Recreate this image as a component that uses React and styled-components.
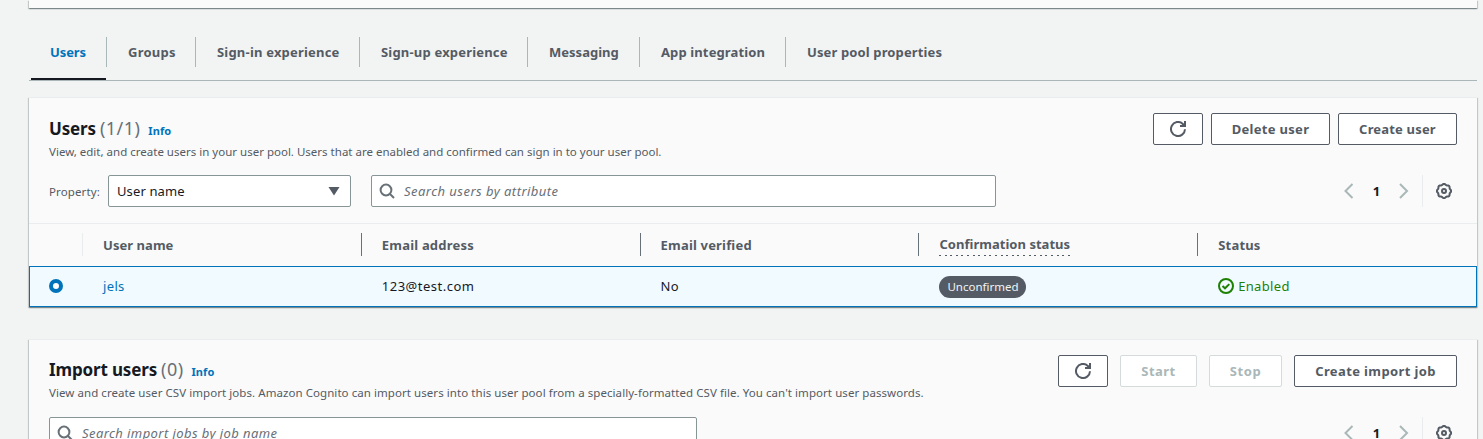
import React from 'react';
import styled, { createGlobalStyle, css } from 'styled-components';

const GlobalStyle = createGlobalStyle`
  *, *::before, *::after { box-sizing: border-box; }
  html, body { margin: 0; background: #f2f3f3; }
  body {
    height: 439px;
    overflow: hidden;
    font-family: "Noto Sans", "Open Sans", sans-serif;
    font-size: 13px;
    line-height: 20px;
    color: #16191f;
  }
`;

const Page = styled.main`
  width: 1483px;
  height: 439px;
  padding: 0 6px 0 29px;
  overflow: hidden;
`;

const Label = styled.span`
  white-space: nowrap;
  letter-spacing: ${(p) => p.$track || 0}px;
`;

const Panel = styled.section`
  background: #fafafa;
  border-top: 1px solid #eaeded;
  box-shadow:
    0 1px 1px 0 rgba(0, 28, 36, 0.3),
    1px 1px 1px 0 rgba(0, 28, 36, 0.15),
    -1px 1px 1px 0 rgba(0, 28, 36, 0.15);
`;

const PreviousPanel = styled(Panel)`
  height: 8px;
  border-top: 0;
`;

const TabList = styled.nav`
  display: flex;
  height: 57px;
  margin-top: 16px;
  padding-left: 2px;
  border-bottom: 1px solid #aab7b8;
`;

const Tab = styled.a`
  display: flex;
  align-items: flex-start;
  height: 56px;
  width: ${(p) => p.$width}px;
  padding-top: 13px;
  border-bottom: 2px solid ${(p) => (p.$active ? '#16191f' : 'transparent')};
  color: ${(p) => (p.$active ? '#0073bb' : '#545b64')};
  font-size: 13px;
  font-weight: 700;
`;

const TabText = styled.span`
  flex: 1;
  height: 30px;
  padding-left: ${(p) => (p.$active ? 19 : 21)}px;
  line-height: 30px;
`;

const TabDivider = styled.span`
  width: 1px;
  height: 30px;
  margin-top: 13px;
  background: #aab7b8;
`;

const UsersPanel = styled(Panel)`
  height: 210px;
  margin-top: 16px;
`;

const ImportPanel = styled(Panel)`
  height: 160px;
  margin-top: 32px;
`;

const PanelHeader = styled.header`
  display: flex;
  justify-content: space-between;
  height: 77px;
  padding: 15px 20px 0;
`;

const Heading = styled.div`
  padding-top: ${(p) => p.$top}px;
`;

const TitleLine = styled.div`
  display: flex;
  align-items: baseline;
  height: 24px;
  line-height: 24px;
`;

const Title = styled.h2`
  margin: 0;
  font-size: 17px;
  font-weight: 700;
  letter-spacing: -0.15px;
`;

const Count = styled.span`
  margin-left: 4px;
  color: #687078;
  font-size: 18px;
  letter-spacing: 0.45px;
`;

const InfoLink = styled.a`
  margin-left: 8px;
  color: #0073bb;
  font-size: 11px;
  font-weight: 700;
  letter-spacing: 0.1px;
`;

const Description = styled.p`
  margin: 3px 0 0;
  color: #545b64;
  font-size: 11.5px;
  line-height: 18px;
`;

const Actions = styled.div`
  display: flex;
  gap: ${(p) => p.$gap}px;
`;

const Button = styled.button`
  display: flex;
  align-items: center;
  justify-content: center;
  width: ${(p) => p.$width}px;
  height: 32px;
  padding: 0;
  border: 1px solid #545b64;
  border-radius: 2px;
  background: #fff;
  color: #545b64;
  font: 700 13px/20px "Noto Sans", sans-serif;
  ${(p) => p.disabled && css`
    border-color: #d5dbdb;
    color: #aab7b8;
  `}
`;

const Icon = styled.svg`
  display: block;
  flex: none;
  width: 16px;
  height: 16px;
  fill: none;
  stroke: currentColor;
  stroke-width: 2;
`;

const Filters = styled.div`
  display: flex;
  align-items: center;
  height: 32px;
  padding: 0 20px;
`;

const FieldLabel = styled.label`
  width: 59px;
  padding-top: 1px;
  color: #545b64;
  font-size: 11.5px;
`;

const Field = styled.div`
  display: flex;
  align-items: center;
  height: 32px;
  border: 1px solid #879596;
  border-radius: 2px;
  background: #fff;
`;

const Select = styled(Field)`
  justify-content: space-between;
  width: 243px;
  padding: 0 10px 0 8px;
`;

const Arrow = styled.svg`
  width: 12px;
  height: 10px;
  fill: #545b64;
`;

const Search = styled(Field)`
  width: ${(p) => p.$width}px;
  margin-left: ${(p) => p.$left || 0}px;
  padding-left: 7px;
  gap: 9px;
  color: #687078;
  font-style: italic;
`;

const Pagination = styled.div`
  display: flex;
  align-items: center;
  height: 32px;
  margin-left: auto;
  color: #aab7b8;
`;

const PageNumber = styled.span`
  width: 39px;
  text-align: center;
  color: #16191f;
  font-size: 13px;
  font-weight: 700;
`;

const Settings = styled.div`
  display: flex;
  align-items: center;
  height: 32px;
  margin-left: 10px;
  padding: 0 5px 0 13px;
  border-left: 1px solid #eaeded;
  color: #545b64;
`;

const Columns = styled.div`
  display: grid;
  grid-template-columns: 54px repeat(5, 1fr);
`;

const TableHead = styled(Columns)`
  height: 43px;
  margin-top: 16px;
  padding: 9px 0 10px;
  border-top: 1px solid #eaeded;
  color: #545b64;
  font-size: 13px;
  font-weight: 700;
`;

const HeadCell = styled.div`
  display: flex;
  align-items: center;
  height: 23px;
  padding-left: 20px;
  border-right: 1px solid ${(p) => (p.$edge === 'light' ? '#eaeded' : '#687078')};
  ${(p) => p.$edge === 'none' && css`border-right: 0;`}
`;

const HintLabel = styled(Label)`
  height: 23px;
  line-height: 22px;
  background: repeating-linear-gradient(90deg, #545b64 0 2px, transparent 2px 5.6px) left bottom / 100% 1px no-repeat;
`;

const TableRow = styled(Columns)`
  align-items: center;
  height: 41px;
  background: #f1faff;
  box-shadow: inset 0 0 0 1px #0073bb;
`;

const Cell = styled.div`
  display: flex;
  align-items: center;
  height: 22px;
  padding-left: 20px;
  padding-bottom: 1px;
  color: ${(p) => p.$color || 'inherit'};
`;

const Radio = styled.span`
  width: 14px;
  height: 14px;
  border: 4px solid #0073bb;
  border-radius: 50%;
  background: #fff;
`;

const Badge = styled.span`
  flex: none;
  height: 22px;
  margin-top: 1px;
  padding: 0 8px;
  border-radius: 11px;
  background: #545b64;
  color: #f2f3f3;
  font-size: 11.5px;
  line-height: 21px;
`;

const StatusText = styled(Label)`
  margin-left: 4px;
`;

const RefreshIcon = () => (
  <Icon viewBox="0 0 16 16">
    <path d="M15 8.2a7 7 0 1 1-2.4-5.5L14 4.2" />
    <path d="M10 5h5V0" />
    <path d="M12.5 5 15 2.5V5z" fill="currentColor" stroke="none" />
  </Icon>
);

const SearchIcon = () => (
  <Icon viewBox="0 0 16 16">
    <circle cx="7" cy="7" r="5.4" />
    <path d="m11 11 4 4" />
  </Icon>
);

const ChevronLeft = () => (
  <Icon viewBox="0 0 16 16"><path d="M11.5 1 4.5 8l7 7" /></Icon>
);

const ChevronRight = () => (
  <Icon viewBox="0 0 16 16"><path d="m4 1 7 7-7 7" /></Icon>
);

const gearPoints = Array.from({ length: 64 }, (_, i) => {
  const a = (i / 64) * Math.PI * 2;
  const r = 6.7 + 0.5 * Math.cos(a * 8);
  return `${(8 + r * Math.cos(a)).toFixed(2)},${(8 + r * Math.sin(a)).toFixed(2)}`;
}).join(' ');

const GearIcon = () => (
  <Icon viewBox="0 0 16 16">
    <polygon points={gearPoints} strokeLinejoin="round" />
    <circle cx="8" cy="8" r="2" />
  </Icon>
);

const CheckIcon = () => (
  <Icon viewBox="0 0 16 16">
    <circle cx="8" cy="8" r="7" />
    <path d="m4.5 8 2.5 2.3 4.3-4.2" />
  </Icon>
);

const tabs = [
  { text: 'Users', width: 75, track: -0.1, active: true },
  { text: 'Groups', width: 88, track: 0.25 },
  { text: 'Sign-in experience', width: 163, track: 0.2 },
  { text: 'Sign-up experience', width: 167, track: 0.19 },
  { text: 'Messaging', width: 111, track: 0.02 },
  { text: 'App integration', width: 145, track: 0.12 },
  { text: 'User pool properties', width: 170, track: 0.13 },
];

const Pager = () => (
  <Pagination>
    <ChevronLeft />
    <PageNumber>1</PageNumber>
    <ChevronRight />
    <Settings><GearIcon /></Settings>
  </Pagination>
);

export default function App() {
  return (
    <>
      <GlobalStyle />
      <Page>
        <PreviousPanel />
        <TabList>
          {tabs.map((tab, i) => (
            <React.Fragment key={tab.text}>
              <Tab $width={tab.width} $active={tab.active}>
                <TabText $active={tab.active}>
                  <Label $track={tab.track}>{tab.text}</Label>
                </TabText>
              </Tab>
              {i < tabs.length - 1 && <TabDivider />}
            </React.Fragment>
          ))}
        </TabList>

        <UsersPanel>
          <PanelHeader>
            <Heading $top={3}>
              <TitleLine>
                <Title>Users</Title>
                <Count>(1/1)</Count>
                <InfoLink>Info</InfoLink>
              </TitleLine>
              <Description>
                <Label $track={0.005}>View, edit, and create users in your user pool. Users that are enabled and confirmed can sign in to your user pool.</Label>
              </Description>
            </Heading>
            <Actions $gap={8}>
              <Button $width={50} aria-label="Refresh"><RefreshIcon /></Button>
              <Button $width={119}><Label $track={0.3}>Delete user</Label></Button>
              <Button $width={119}><Label $track={0.18}>Create user</Label></Button>
            </Actions>
          </PanelHeader>
          <Filters>
            <FieldLabel><Label $track={0.12}>Property:</Label></FieldLabel>
            <Select>
              <Label $track={0.12}>User name</Label>
              <Arrow viewBox="0 0 12 10"><path d="M.5 1h11L6 9.5z" /></Arrow>
            </Select>
            <Search $width={625} $left={20}>
              <SearchIcon />
              <Label $track={0.46}>Search users by attribute</Label>
            </Search>
            <Pager />
          </Filters>
          <TableHead>
            <HeadCell $edge="light" />
            <HeadCell><Label $track={0.05}>User name</Label></HeadCell>
            <HeadCell><Label $track={0.2}>Email address</Label></HeadCell>
            <HeadCell><Label $track={0.18}>Email verified</Label></HeadCell>
            <HeadCell><HintLabel $track={0.03}>Confirmation status</HintLabel></HeadCell>
            <HeadCell $edge="none"><Label $track={0.2}>Status</Label></HeadCell>
          </TableHead>
          <TableRow>
            <Cell><Radio /></Cell>
            <Cell $color="#0073bb"><Label $track={0.35}>jels</Label></Cell>
            <Cell><Label $track={0.5}>123@test.com</Label></Cell>
            <Cell><Label $track={0.3}>No</Label></Cell>
            <Cell><Badge><Label>Unconfirmed</Label></Badge></Cell>
            <Cell $color="#1d8102">
              <CheckIcon />
              <StatusText $track={0.33}>Enabled</StatusText>
            </Cell>
          </TableRow>
        </UsersPanel>

        <ImportPanel>
          <PanelHeader>
            <Heading $top={2}>
              <TitleLine>
                <Title>Import users</Title>
                <Count>(0)</Count>
                <InfoLink>Info</InfoLink>
              </TitleLine>
              <Description>
                <Label $track={0.062}>View and create user CSV import jobs. Amazon Cognito can import users into this user pool from a specially-formatted CSV file. You can't import user passwords.</Label>
              </Description>
            </Heading>
            <Actions $gap={12}>
              <Button $width={50} aria-label="Refresh"><RefreshIcon /></Button>
              <Button $width={77} disabled><Label $track={0.5}>Start</Label></Button>
              <Button $width={73} disabled><Label $track={0.6}>Stop</Label></Button>
              <Button $width={163}><Label $track={0.38}>Create import job</Label></Button>
            </Actions>
          </PanelHeader>
          <Filters>
            <Search $width={648}>
              <SearchIcon />
              <Label $track={0.42}>Search import jobs by job name</Label>
            </Search>
            <Pager />
          </Filters>
        </ImportPanel>
      </Page>
    </>
  );
}
